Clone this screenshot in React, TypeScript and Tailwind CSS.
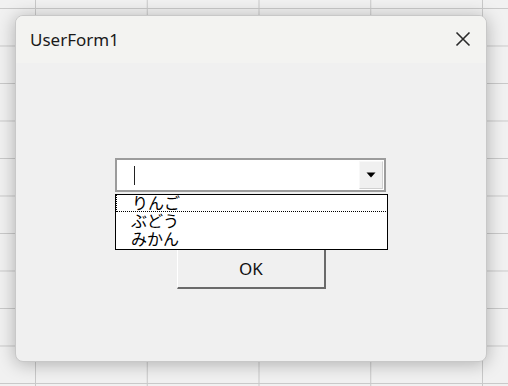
import React from "react";

export default function App() {
  return (
    <div className="w-[508px] h-[386px] overflow-hidden bg-[#f1f1f1] bg-[linear-gradient(to_right,#c9c9c9_1px,transparent_1px),linear-gradient(to_bottom,#c9c9c9_1px,transparent_1px)] bg-[size:111.75px_37.5px] bg-[position:35px_8px] pt-[15px] pl-[15px]">
      <div
        className="w-[472px] h-[347px] rounded-[8px] bg-[#f0f0f0] shadow-[0_2px_18px_rgba(0,0,0,0.28)] border border-[#c8c8c8] flex flex-col overflow-hidden"
        style={{ fontFamily: '"Noto Sans", "Noto Sans CJK JP", sans-serif' }}
      >
        <div className="h-[47px] shrink-0 bg-[#f3f3f1] flex items-center justify-between pl-[14px] pr-[15px]">
          <span className="text-[17px] text-[#1a1a1a] leading-none -mt-[1px]">UserForm1</span>
          <svg width="16" height="16" viewBox="0 0 16 16" className="-mt-[1px]">
            <path d="M1.5 1.5 L14.5 14.5 M14.5 1.5 L1.5 14.5" stroke="#2a2a2a" strokeWidth="1.6" fill="none" />
          </svg>
        </div>
        <div className="flex-1 pt-[95px] pl-[99px]">
          <div className="relative w-[271px]">
            <div className="h-[34px] border-2 border-[#9c9c9c] bg-white flex items-center">
              <div className="w-[1px] h-[19px] bg-[#222] ml-[17px] mt-[1px]" />
              <div className="ml-auto mr-[1px] w-[24px] h-[28px] bg-[#f0f0f0] border border-t-[#f8f8f8] border-l-[#f8f8f8] border-r-[#d0d0d0] border-b-[#d0d0d0] flex items-center justify-center">
                <svg width="10" height="6" viewBox="0 0 10 6">
                  <path d="M0.5 0.5 L9.5 0.5 L5 5.5 Z" fill="#000" />
                </svg>
              </div>
            </div>
            <div className="flex mt-[55px] ml-[62px]">
              <div className="w-[149px] h-[42px] bg-[#f0f0f0] border-l border-t border-l-white border-t-white border-r-2 border-b-2 border-r-[#6a6a6a] border-b-[#6a6a6a] flex items-center justify-center">
                <span className="text-[17px] text-[#111] leading-none mt-[2px]">OK</span>
              </div>
            </div>
            <div
              className="absolute left-0 top-[36px] w-[273px] h-[56px] bg-white border border-black overflow-hidden"
              style={{ fontFamily: '"Noto Sans CJK JP", sans-serif' }}
            >
              <div className="relative -mt-[2px] pl-[15px] text-[16px] leading-[18px] text-black">
                <div className="h-[18px] -mx-[15px] px-[15px] border border-dotted border-black -mb-[1px] mt-[1px]">
                  <span className="block -mt-[2px]">りんご</span>
                </div>
                <div className="h-[18px]">ぶどう</div>
                <div className="h-[18px]">みかん</div>
              </div>
            </div>
          </div>
        </div>
      </div>
    </div>
  );
}
